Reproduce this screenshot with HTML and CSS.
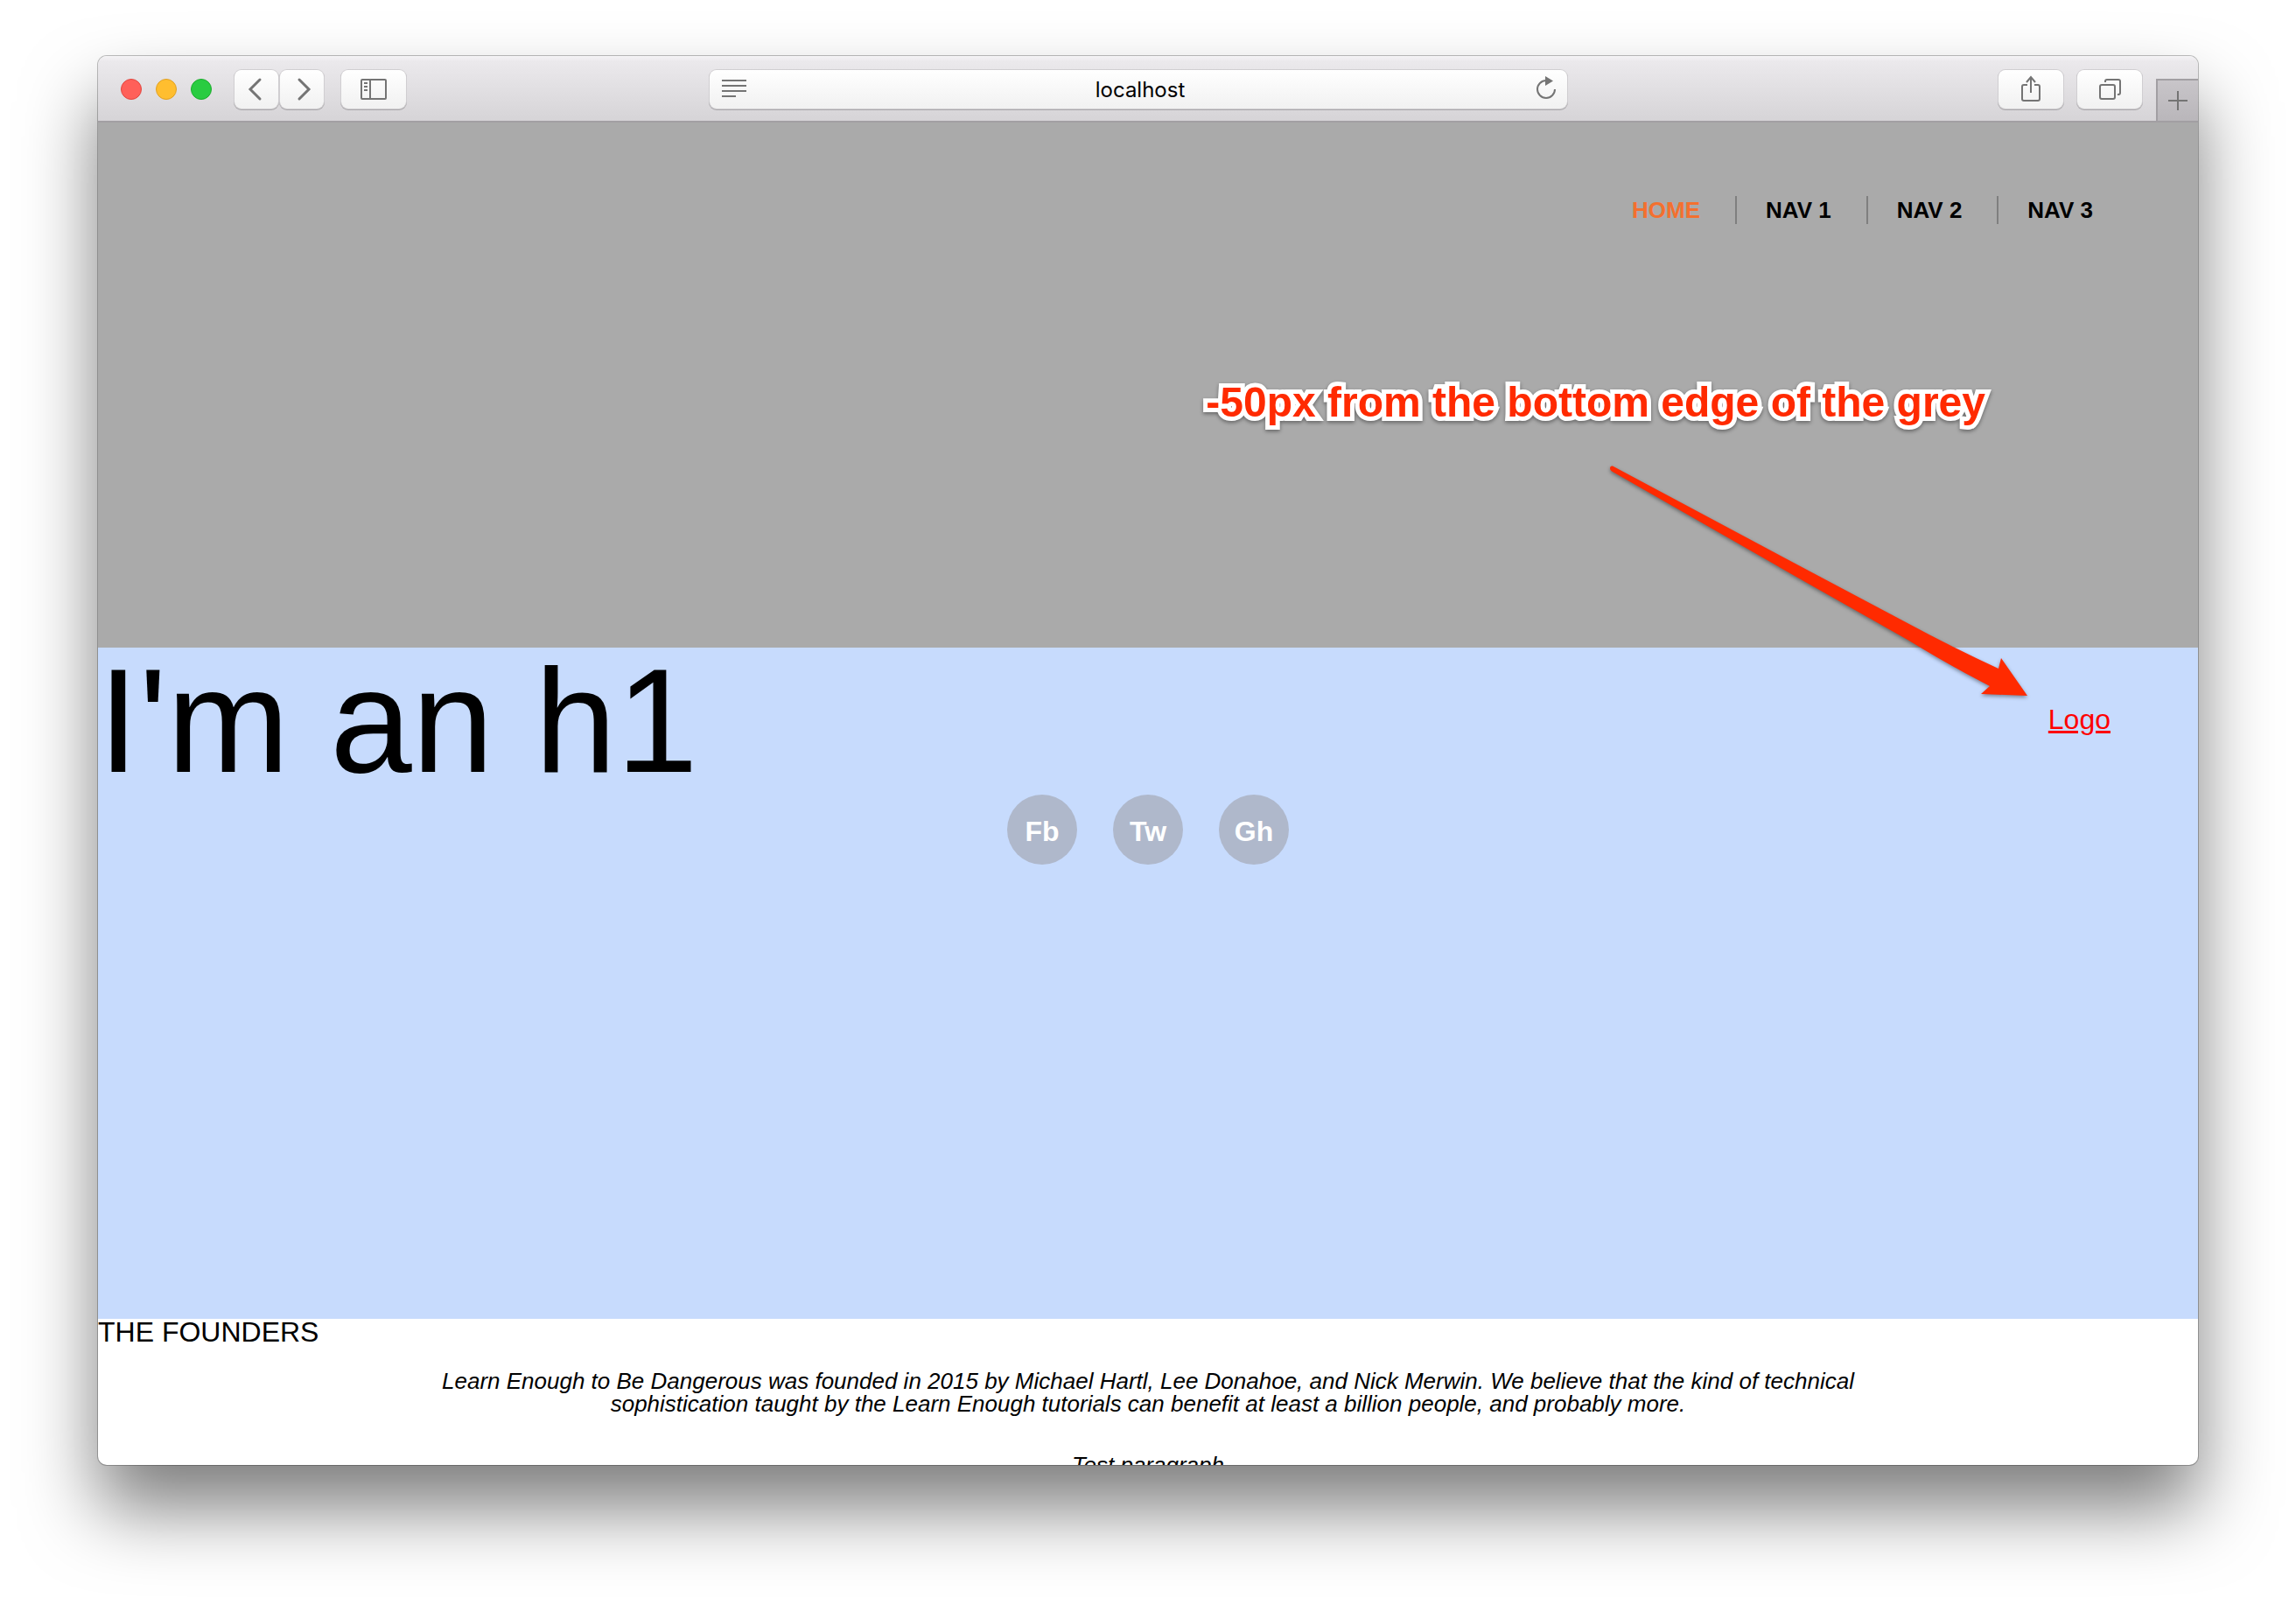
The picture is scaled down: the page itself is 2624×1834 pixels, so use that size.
FILE: index.html
```html
<!DOCTYPE html>
<html lang="en">
<head>
<meta charset="utf-8">
<title>localhost</title>
<link rel="stylesheet" href="styles.css">
</head>
<body>
<div class="window">
  <div class="toolbar">
    <div class="tools tools-left">
      <div class="lights">
        <button class="light close" aria-label="Close"></button>
        <button class="light minimize" aria-label="Minimize"></button>
        <button class="light maximize" aria-label="Zoom"></button>
      </div>
      <div class="history">
        <button class="tool narrow" aria-label="Back"><svg width="32" height="32" viewBox="0 0 32 32"><path d="M20 5 9 16 20 27" stroke-width="3" stroke-linecap="round"/></svg></button>
        <button class="tool narrow" aria-label="Forward"><svg width="32" height="32" viewBox="0 0 32 32"><path d="M13 5 24 16 13 27" stroke-width="3" stroke-linecap="round"/></svg></button>
      </div>
      <button class="tool" aria-label="Sidebar"><svg width="32" height="32" viewBox="0 0 32 32"><rect x="2" y="5" width="28" height="22" rx="1"/><path d="M12 5v22M5 9h4M5 13h4M5 17h4"/></svg></button>
    </div>
    <div class="address">
      <button class="inset" aria-label="Reader"><svg width="28" height="32" viewBox="0 0 28 32"><path d="M0 6h28M0 12h28M0 18h28M0 24h16"/></svg></button>
      <input class="url" type="text" value="localhost" aria-label="Address">
      <button class="inset" aria-label="Reload"><svg width="28" height="32" viewBox="0 0 28 32"><path d="M24 16a10 10 0 1 1-10-10"/><path class="solid" d="M13 1v11l9-5.500z"/></svg></button>
    </div>
    <div class="tools tools-right">
      <button class="tool" aria-label="Share"><svg width="32" height="32" viewBox="0 0 32 32"><path d="M12 11H8q-2 0-2 2v14q0 2 2 2h16q2 0 2-2V13q0-2-2-2h-4M16 20V2M11 8l5-6 5 6"/></svg></button>
      <button class="tool" aria-label="Tabs"><svg width="32" height="32" viewBox="0 0 32 32"><rect x="5" y="11" width="17" height="16" rx="2"/><path d="M11 8V7q0-2 2-2h13q2 0 2 2v13q0 2-2 2h-1"/></svg></button>
    </div>
    <button class="new-tab" aria-label="New tab"><svg width="24" height="24" viewBox="0 0 24 24"><path d="M12 1v22M1 12h22"/></svg></button>
  </div>

  <div class="page">
    <header class="header">
      <nav class="nav">
        <a class="active" href="#">HOME</a>
        <a href="#">NAV 1</a>
        <a href="#">NAV 2</a>
        <a href="#">NAV 3</a>
      </nav>
      <a class="logo" href="#">Logo</a>
      <div class="note">
        <p class="note-text">-50px from the bottom edge of the grey</p>
        <svg class="arrow" width="480" height="270" viewBox="0 0 480 270"><path d="M4 1.500Q1 1 1 4.500Q1 6 3 7.500L226 135L341 200Q390 230 435 253L425 262L478 264L448 221L445 233Q393 209 341 181L226 120Z"/></svg>
      </div>
    </header>
    <section class="hero">
      <h1>I'm an h1</h1>
      <div class="social">
        <a href="#">Fb</a>
        <a href="#">Tw</a>
        <a href="#">Gh</a>
      </div>
    </section>
    <section class="founders">
      <h2>THE FOUNDERS</h2>
      <p>Learn Enough to Be Dangerous was founded in 2015 by Michael Hartl, Lee Donahoe, and Nick Merwin. We believe that the kind of technical sophistication taught by the Learn Enough tutorials can benefit at least a billion people, and probably more.</p>
      <p class="extra">Test paragraph</p>
    </section>
  </div>
</div>
</body>
</html>
```
FILE: styles.css
```css
* {
  box-sizing: border-box;
}

body {
  margin: 0;
  height: 100vh;
  padding: 64px 112px 160px;
  display: flex;
  background: #fff;
  color: #000;
  font-family: "Liberation Sans", Arial, Helvetica, sans-serif;
  font-size: 32px;
  line-height: 1;
  overflow: hidden;
}

h1, h2, p {
  margin: 0;
  font-weight: normal;
}

button {
  margin: 0;
  padding: 0;
  border: 0;
  background: none;
}

svg {
  display: block;
  fill: none;
  stroke: #747474;
  stroke-width: 2;
}

.window {
  flex: 1;
  min-width: 0;
  display: flex;
  flex-direction: column;
  overflow: hidden;
  border-radius: 10px;
  background: #fff;
  box-shadow: 0 0 0 1px rgba(0, 0, 0, 0.25), 0 50px 84px rgba(0, 0, 0, 0.51);
}

/* Browser toolbar */
.toolbar {
  flex: none;
  height: 76px;
  display: flex;
  align-items: center;
  padding: 2px 0 0 26px;
  border-bottom: 2px solid #a29fa3;
  background: linear-gradient(#f4f3f5, #ebe9ec 6px, #d6d4d7);
}

.tools {
  flex: 1 1 0;
  display: flex;
  align-items: center;
}

.tools-left {
  box-sizing: content-box;
  padding-right: 16px;
}

.tools-right {
  justify-content: flex-end;
  gap: 16px;
}

.lights {
  display: flex;
  gap: 16px;
  margin-right: 26px;
}

.light {
  width: 24px;
  height: 24px;
  border: 1px solid;
  border-radius: 50%;
}

.close {
  background: #ff6059;
  border-color: #e2463f;
}

.minimize {
  background: #ffbe2f;
  border-color: #e0a023;
}

.maximize {
  background: #29cc41;
  border-color: #1bac2c;
}

.history {
  display: flex;
  gap: 2px;
  margin-right: 20px;
}

.tool,
.address {
  height: 44px;
  border-radius: 8px;
  background: linear-gradient(#fff, #f1f1f1);
  box-shadow: 0 0 0 1px #d0ced1, 0 1px 0 1px #aaa8ab;
}

.tool {
  width: 74px;
  display: grid;
  place-items: center;
}

.narrow {
  width: 50px;
}

.address {
  width: calc(41% + 6px);
  display: flex;
  align-items: center;
  padding: 0 10px 0 14px;
}

.url {
  flex: 1;
  min-width: 0;
  padding: 2px 0 0;
  border: 0;
  background: none;
  color: #000;
  font: 24px/32px Inter, sans-serif;
  text-align: center;
}

.solid {
  fill: #747474;
  stroke: none;
}

.new-tab {
  align-self: flex-end;
  width: 48px;
  height: 48px;
  margin-left: 16px;
  display: grid;
  place-items: center;
  border: solid #a29fa3;
  border-width: 2px 0 0 2px;
  background: linear-gradient(#c8c5c9, #b9b6ba);
}

/* Page content */
.page {
  flex: 1;
  min-height: 0;
  overflow: hidden;
}

.header {
  position: relative;
  height: 600px;
  padding: 84px 120px 0;
  background: #aaa;
}

.nav {
  display: flex;
  justify-content: flex-end;
  font-size: 26px;
  font-weight: bold;
  line-height: 32px;
}

.nav a {
  padding: 0 40px 0 33px;
  border-right: 2px solid #7f7f7f;
  color: #000;
  text-decoration: none;
}

.nav a:last-child {
  padding-right: 0;
  border-right: 0;
}

.nav .active {
  color: #f4702f;
}

.logo {
  position: absolute;
  right: 100px;
  bottom: -98px;
  color: #f00;
}

/* Callout drawn over the header */
.note {
  position: absolute;
  top: 296px;
  right: 243px;
  color: #ff2a00;
}

.note-text {
  font-size: 48px;
  font-weight: bold;
  white-space: nowrap;
  paint-order: stroke fill;
  -webkit-text-stroke: 10px #fff;
  stroke-linejoin: round;
  filter: drop-shadow(0 2px 2px rgba(0, 0, 0, 0.4));
}

.arrow {
  position: absolute;
  top: 95px;
  left: 461px;
  overflow: visible;
  fill: #ff2a00;
  stroke: none;
  filter: drop-shadow(0 2px 2px rgba(0, 0, 0, 0.4));
}

.hero {
  height: 767px;
  background: #c7dbfd;
}

h1 {
  font-size: 168px;
}

.social {
  display: flex;
  justify-content: center;
  gap: 41px;
}

.social a {
  width: 80px;
  height: 80px;
  padding-top: 2px;
  border-radius: 50%;
  background: #afb8cb;
  color: #fff;
  font-weight: bold;
  line-height: 80px;
  text-align: center;
  text-decoration: none;
}

h2 {
  font-size: 32px;
  line-height: 30px;
}

.founders p {
  width: 70%;
  margin: 28px auto 0;
  font-size: 26px;
  font-style: italic;
  text-align: center;
}

.founders .extra {
  margin-top: 44px;
}
```
